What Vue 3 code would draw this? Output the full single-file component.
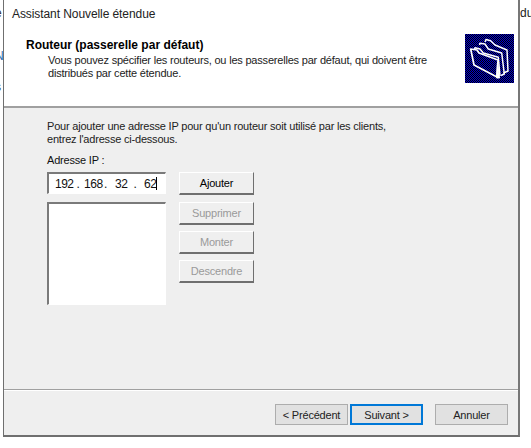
<script setup>
const sideButtons = [
  { label: 'Supprimer' },
  { label: 'Monter' },
  { label: 'Descendre' }
]
const octets = ['192', '168', '32', '62']
</script>

<template>
  <div class="page">
    <div class="strip strip-left">
      <span class="s1">e</span>
      <span class="s2">N</span>
      <span class="s3">s</span>
    </div>
    <div class="window">
      <div class="titlebar">Assistant Nouvelle étendue</div>
      <div class="header">
        <div class="header-text">
          <div class="heading">Routeur (passerelle par défaut)</div>
          <div class="sub">Vous pouvez spécifier les routeurs, ou les passerelles par défaut, qui doivent être<br />distribués par cette étendue.</div>
        </div>
        <svg class="logo" width="49" height="49" viewBox="0 0 49 49">
          <defs>
            <pattern id="chk" width="2" height="2" patternUnits="userSpaceOnUse">
              <rect width="2" height="2" fill="#000" shape-rendering="crispEdges" />
              <rect width="1" height="1" fill="#0000d0" shape-rendering="crispEdges" />
              <rect x="1" y="1" width="1" height="1" fill="#0000d0" shape-rendering="crispEdges" />
            </pattern>
          </defs>
          <rect width="49" height="49" fill="#000" />
          <rect width="49" height="49" fill="url(#chk)" />
          <g fill="none" stroke="#fff" stroke-width="1.5" stroke-linejoin="round">
            <path d="M20 8 L21 5.5 L25.6 6.7 L30 11 L42 16 L43 37 L38.5 39" />
            <path d="M14.5 11 L15 9.3 L20 10 L23.3 15 L36.7 19 L39.3 40 L36 41.5" />
            <path d="M9.5 15 L10 13.7 L15 15 L18.3 19 L33.3 23.3 L35 42" />
            <path d="M5.7 15 L9 31 L32 43 L33 26 L14 19 L12 16 Z" stroke-width="1.7" />
            <path d="M32.5 28 L34.5 44 L31.5 44 Z" fill="#fff" stroke-width="1" />
          </g>
        </svg>
      </div>
      <div class="body">
        <p class="intro">Pour ajouter une adresse IP pour qu'un routeur soit utilisé par les clients,<br />entrez l'adresse ci-dessous.</p>
        <div class="ip-label">Adresse IP :</div>
        <div class="columns">
          <div class="left-col">
            <div class="field ip-field">
              <template v-for="(o, i) in octets" :key="i">
                <span class="octet">{{ o }}</span>
                <span v-if="i < 3" :class="['dot', 'dot' + i]">.</span>
              </template>
              <span class="caret"></span>
            </div>
            <div class="field list-field"></div>
          </div>
          <div class="right-col">
            <div class="btn3d first">Ajouter</div>
            <div v-for="b in sideButtons" :key="b.label" class="btn3d disabled">{{ b.label }}</div>
          </div>
        </div>
      </div>
      <div class="footer">
        <div class="flat">&lt; Précédent</div>
        <div class="flat primary">Suivant &gt;</div>
        <div class="flat cancel">Annuler</div>
      </div>
    </div>
    <div class="strip strip-right"><span>du</span></div>
  </div>
</template>

<style>
html, body { margin: 0; background: #fff; }
</style>

<style scoped>
.page {
  width: 531px;
  height: 448px;
  display: flex;
  overflow: hidden;
  background: #fff;
  font-family: "Liberation Sans", Arial, sans-serif;
  font-size: 11px;
  letter-spacing: -0.2px;
  color: #111;
}
.strip {
  height: 100px;
  overflow: hidden;
  font-size: 12px;
  line-height: 14px;
  letter-spacing: 0;
}
.strip-left { width: 3px; flex: none; display: flex; flex-direction: column; align-items: flex-end; }
.strip-left span { display: block; width: 8px; flex: none; }
.s1 { margin-top: 6px; color: #333; }
.s2 { margin-top: 29px; color: #2a6fb0; }
.s3 { margin-top: 17px; color: #333; }
.strip-right { flex: 1; padding: 6px 0 0 0; color: #222; }
.window {
  width: 517px;
  height: 437px;
  box-sizing: border-box;
  flex: none;
  border-left: 1px solid #6f6f6f;
  border-right: 2px solid #777;
  border-bottom: 2px solid #6f6f6f;
  display: flex;
  flex-direction: column;
  background: #fff;
}
.titlebar {
  height: 28px;
  flex: none;
  box-sizing: border-box;
  padding: 6px 0 0 8px;
  font-size: 12px;
  letter-spacing: -0.08px;
  line-height: 16px;
  color: #222;
}
.header {
  height: 80px;
  flex: none;
  box-sizing: border-box;
  border-bottom: 2px solid #a0a0a0;
  display: flex;
  justify-content: space-between;
  padding: 6px 4px 0 22px;
}
.heading { font-weight: 700; font-size: 12px; letter-spacing: 0; line-height: 14px; color: #000; margin-top: 4px; }
.sub { margin: 2px 0 0 22px; line-height: 13px; color: #222; }
.logo { display: block; flex: none; }
.body {
  flex: 1;
  background: #efefef;
  border-bottom: 1px solid #a0a0a0;
  padding: 12px 0 0 43px;
}
.intro { margin: 0; line-height: 13px; color: #222; }
.ip-label { margin-top: 7px; line-height: 14px; }
.columns { display: flex; gap: 13px; margin-top: 5px; }
.left-col { width: 119px; display: flex; flex-direction: column; gap: 8px; }
.field {
  background: #fff;
  box-sizing: border-box;
  border-top: 2px solid #7a7a7a;
  border-left: 2px solid #7a7a7a;
  border-right: 1px solid #fff;
  border-bottom: 1px solid #fff;
}
.ip-field {
  height: 22px;
  display: flex;
  align-items: center;
  padding-left: 6px;
  font-size: 12px;
  letter-spacing: -0.5px;
}
.octet { flex: none; }
.dot { flex: none; box-sizing: border-box; }
.dot0 { width: 10.5px; padding-left: 3px; }
.dot1 { width: 12.5px; padding-left: 1.5px; }
.dot2 { width: 16.7px; padding-left: 6px; }
.caret { width: 1px; height: 13px; background: #000; }
.list-field { height: 103px; }
.right-col { display: flex; flex-direction: column; gap: 6px; }
.btn3d {
  width: 75px;
  height: 23px;
  box-sizing: border-box;
  background: #efefef;
  border-top: 1px solid #fff;
  border-left: 1px solid #fff;
  border-right: 1px solid #6f6f6f;
  border-bottom: 2px solid #6f6f6f;
  display: flex;
  align-items: center;
  justify-content: center;
  color: #000;
}
.btn3d.first { margin-bottom: 1px; }
.btn3d.disabled { color: #9a9a9a; }
.footer {
  height: 45px;
  flex: none;
  box-sizing: border-box;
  background: #efefef;
  border-top: 1px solid #fff;
  display: flex;
  padding: 13px 0 0 271px;
}
.flat {
  width: 73px;
  height: 21px;
  box-sizing: border-box;
  background: #e1e1e1;
  border: 1px solid #adadad;
  display: flex;
  align-items: center;
  justify-content: center;
  color: #222;
}
.primary { border: 2px solid #0078d7; margin-left: 2px; }
.cancel { margin-left: 12px; }
</style>
